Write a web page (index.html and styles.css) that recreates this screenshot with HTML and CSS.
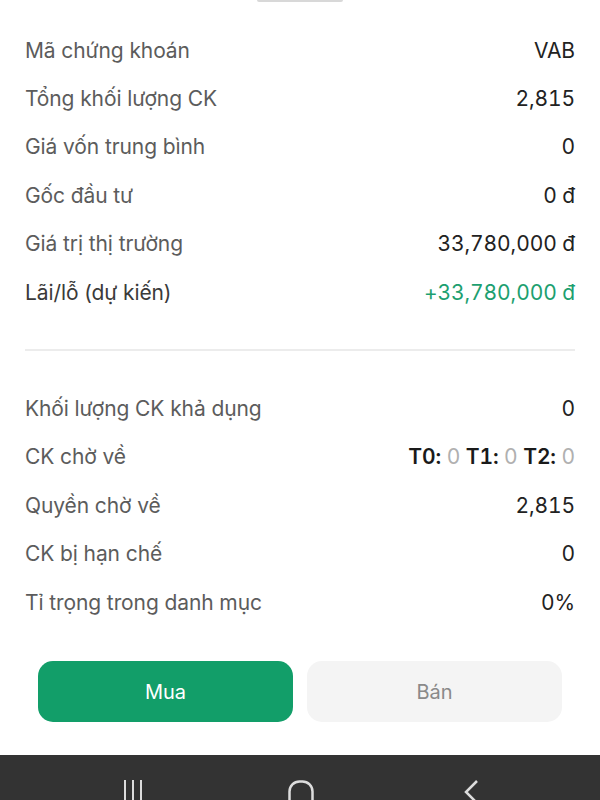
FILE: index.html
```html
<!DOCTYPE html>
<html lang="vi">
<head>
  <meta charset="UTF-8" />
  <meta name="viewport" content="width=device-width, initial-scale=1.0"/>
  <title>Chi tiết CK - VAB</title>
  <link rel="stylesheet" href="styles.css">
</head>
<body>
  <div class="sheet">
    <div class="handle"></div>

    <div class="info-list first">
      <div class="row"><span class="label">Mã chứng khoán</span><span class="value">VAB</span></div>
      <div class="row"><span class="label">Tổng khối lượng CK</span><span class="value">2,815</span></div>
      <div class="row"><span class="label">Giá vốn trung bình</span><span class="value">0</span></div>
      <div class="row"><span class="label">Gốc đầu tư</span><span class="value">0 đ</span></div>
      <div class="row"><span class="label">Giá trị thị trường</span><span class="value">33,780,000 đ</span></div>
      <div class="row"><span class="label dark">Lãi/lỗ (dự kiến)</span><span class="value up">+33,780,000 đ</span></div>
    </div>

    <div class="divider"></div>

    <div class="info-list">
      <div class="row"><span class="label">Khối lượng CK khả dụng</span><span class="value">0</span></div>
      <div class="row">
        <span class="label">CK chờ về</span>
        <span class="value pending">
          <b>T0:</b> <i>0</i> <b>T1:</b> <i>0</i> <b>T2:</b> <i>0</i>
        </span>
      </div>
      <div class="row"><span class="label">Quyền chờ về</span><span class="value">2,815</span></div>
      <div class="row"><span class="label">CK bị hạn chế</span><span class="value">0</span></div>
      <div class="row"><span class="label">Tỉ trọng trong danh mục</span><span class="value">0%</span></div>
    </div>

    <div class="actions">
      <button class="btn buy">Mua</button>
      <button class="btn sell">Bán</button>
    </div>
  </div>

  <div class="navbar">
    <svg width="24" height="20" viewBox="0 0 24 20"><path d="M4 0v20M12 0v20M20 0v20" stroke="#ddd" stroke-width="2" fill="none"/></svg>
    <svg width="26" height="20" viewBox="0 0 26 20"><rect x="1.5" y="1.5" width="23" height="30" rx="10" stroke="#ddd" stroke-width="2.5" fill="none"/></svg>
    <svg width="18" height="20" viewBox="0 0 18 20"><path d="M15 1L4 12l11 11" stroke="#ddd" stroke-width="2.5" fill="none"/></svg>
  </div>
</body>
</html>
```

FILE: styles.css
```css
body { margin: 0; background: #fff; font-family: Inter, "Noto Sans", sans-serif; }

.sheet { height: 755px; padding: 0 25px; box-sizing: border-box; position: relative; }
.handle {
  position: absolute; top: 0; left: 257px; width: 86px; height: 2px;
  background: #d8d8d8; border-radius: 0 0 2px 2px;
}

.info-list { display: flex; flex-direction: column; }
.info-list.first { padding-top: 26px; }
.row {
  display: flex; justify-content: space-between; align-items: center;
  height: 48.4px; font-size: 21px; letter-spacing: -0.1px;
}
.label { color: #5c5c5c; }
.label.dark { color: #3a3a3a; }
.value { color: #222; font-variant-numeric: tabular-nums; }
.value.up { color: #1d9f70; }
.pending b { font-weight: 600; color: #1a1a1a; }
.pending i { font-style: normal; color: #b0b0b0; }

.divider { height: 2px; background: #ececec; margin: 33px 0 33px; }

.actions { display: flex; gap: 14px; padding: 35px 13px 0; }
.btn {
  flex: 1; height: 61px; border: none; border-radius: 15px;
  font-family: inherit; font-size: 20px; cursor: pointer;
}
.btn.buy { background: #129e69; color: #fff; }
.btn.sell { background: #f4f4f4; color: #8a8a8a; }

.navbar {
  height: 45px; background: #333; display: flex; align-items: flex-end;
  justify-content: center; overflow: hidden;
}
.navbar svg { display: block; }
.navbar svg:nth-child(1) { margin-right: 143px; }
.navbar svg:nth-child(2) { margin-right: 148px; }
```
